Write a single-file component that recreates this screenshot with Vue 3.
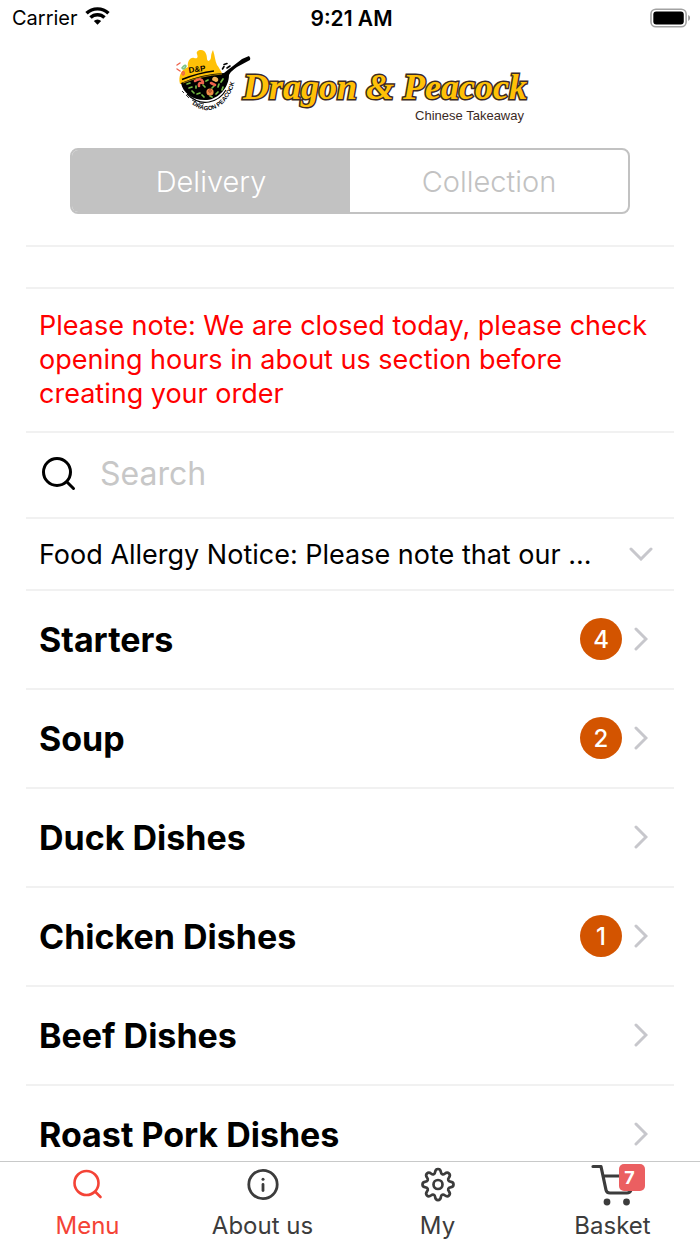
<script setup>
import { ref } from 'vue'

const mode = ref('Delivery')
const query = ref('')
const modes = ['Delivery', 'Collection']
const categories = [
  { name: 'Starters', count: 4 },
  { name: 'Soup', count: 2 },
  { name: 'Duck Dishes', count: 0 },
  { name: 'Chicken Dishes', count: 1 },
  { name: 'Beef Dishes', count: 0 },
  { name: 'Roast Pork Dishes', count: 0 },
]
</script>

<template>
  <div class="screen">
    <div class="status">
      <div class="carrier">
        <span>Carrier</span>
        <svg width="25" height="20" viewBox="0 0 26 20" aria-hidden="true">
          <g fill="none" stroke="#000" stroke-width="3.6">
            <path d="M1.6 7.2a16.4 16.4 0 0 1 22.8 0" />
            <path d="M5.7 11.6a10.4 10.4 0 0 1 14.6 0" />
          </g>
          <path d="M13 19 9.2 15.2a5.4 5.4 0 0 1 7.6 0z" />
        </svg>
      </div>
      <span class="time">9:21 AM</span>
      <div class="battery">
        <svg width="41" height="20" viewBox="0 0 42 20" aria-hidden="true">
          <rect x="1" y="1" width="36" height="18" rx="5" fill="none" stroke="#a2a2a2" stroke-width="1.6" />
          <rect x="3.4" y="3.4" width="31.2" height="13.2" rx="3" />
          <path d="M39.2 7v6q1.8-.8 1.8-3t-1.8-3z" fill="#8e8e8e" />
        </svg>
      </div>
    </div>

    <header class="brand">
      <svg class="logo" viewBox="0 0 360 80" role="img" aria-label="Dragon &amp; Peacock Chinese Takeaway">
        <!-- flames -->
        <path fill="#ffc107" d="M10 39C8 31 11 25 18 22C17 17 20 12 24 13C28 14 28 12 27 9C26 7 28 5 31 5C36 5 37 11 37 14C38 18 41 15 41 12C41 9 42 7 43 5C45 11 45 16 47 20C49 22 50 25 52 28L50 30L11 39Z" />
        <!-- wok and handle -->
        <path d="M11 38Q31 29 54 28L59 24Q67 18 72 14L79 11Q81 13 80 15L67 22Q60 27 59 30C59 42 49 54 37 55C23 56 13 48 11 38Z" />
        <path d="M12 34.500Q28 28 44 26" fill="none" stroke="#000" stroke-width="1.4" />
        <path d="M13 38Q30 31 52 29" fill="none" stroke="#ffc107" stroke-width="0.6" />
        <path d="M17 49Q27 59 39 57Q50 55 56 45" fill="none" stroke="#000" stroke-width="1.2" />
        <path d="M12 46L14 48M16 50L19 53M22 55L26 57M29 58L34 59" fill="none" stroke="#222" stroke-width="0.9" />
        <path d="M54 19.500L57 18.500M52.500 24L54 21.500M57 23L60 21" fill="none" stroke="#000" stroke-width="1.6" stroke-linecap="round" />
        <!-- vegetables -->
        <g fill="none" stroke-linecap="round" stroke-width="1.700">
          <path stroke="#75b943" d="M17 39L20 38M19 43L22 42M22 46L24 48M27 49L30 48M32 50L34 52M26 43L26 41M36 36L38 35M33 40L35 42M48 42L49 39M51 37L53 34M46 49L48 47M52 45L53 42M44 41L42 43M40 51L42 52" />
          <path stroke="#ef634c" stroke-width="2.600" d="M25 36Q31 32 33 37M29 41Q28 37 33 38M41 38L45 40" />
          <path stroke="#ef634c" stroke-width="1.400" d="M7 20L10 18M7 24L10 26M12 29Q12 26 14 27Q15 29 13 30" />
          <path stroke="#7dc383" stroke-width="1.600" d="M12 23Q15 19 16 21Q15 24 13 24" />
        </g>
        <circle cx="40" cy="47" r="3.600" fill="#f28c47" />
        <circle cx="40" cy="46" r="1.300" fill="none" stroke="#a7472a" />
        <path fill="#f2b45b" d="M42 34Q43 31 46 32Q49 33 48 36Q46 38 44 36Q42 36 42 34Z" />
        <path id="wok-rim" d="M22 59C34 69 47 66 55 56C60 50 64 43 66 30" fill="none" />
        <text class="wok-ring"><textPath href="#wok-rim">DRAGON PEACOCK</textPath></text>
        <text class="wok-name" x="19" y="28" transform="rotate(-8 19 28)">D&amp;P</text>
        <text class="wordmark" x="73" y="54">Dragon &amp; Peacock</text>
        <text class="tagline" x="354" y="75">Chinese Takeaway</text>
      </svg>
    </header>

    <main class="content">
      <div class="segment" role="group" aria-label="Order type">
        <button
          v-for="m in modes"
          :key="m"
          type="button"
          :class="{ active: mode === m }"
          :aria-pressed="mode === m"
          @click="mode = m"
        >{{ m }}</button>
      </div>

      <div class="spacer"></div>
      <p class="notice">Please note: We are closed today, please check opening hours in about us section before creating your order</p>

      <div class="search">
        <label for="search" aria-label="Search">
          <svg width="36" height="36" viewBox="0 0 36 36" fill="none" stroke="#000" stroke-width="3" stroke-linecap="round" aria-hidden="true">
            <circle cx="17" cy="17" r="13.500" />
            <path d="M27 27l6.500 6.500" />
          </svg>
        </label>
        <input id="search" v-model="query" type="text" placeholder="Search" />
      </div>

      <button class="allergy" type="button">
        <span>Food Allergy Notice: Please note that our ...</span>
        <svg width="24" height="14" viewBox="0 0 24 14" aria-hidden="true">
          <path d="M2 2l10 10L22 2" fill="none" stroke="#c7c7cc" stroke-width="3" stroke-linecap="round" />
        </svg>
      </button>

      <button v-for="c in categories" :key="c.name" class="category" type="button">
        <span class="name">{{ c.name }}</span>
        <span v-if="c.count" class="count">{{ c.count }}</span>
        <svg width="14" height="24" viewBox="0 0 14 24" aria-hidden="true">
          <path d="M2 2l10 10L2 22" fill="none" stroke="#c7c7cc" stroke-width="3" stroke-linecap="round" />
        </svg>
      </button>
    </main>

    <nav class="tabs">
      <a href="#menu" class="current" aria-current="page">
        <svg width="44" height="44" viewBox="0 0 44 44" fill="none" stroke="currentColor" stroke-width="2.6" stroke-linecap="round" aria-hidden="true">
          <circle cx="20.500" cy="21" r="12" />
          <path d="M29.500 30l5 5" />
        </svg>
        <span>Menu</span>
      </a>
      <a href="#about">
        <svg width="44" height="44" viewBox="0 0 44 44" fill="none" stroke="currentColor" stroke-width="2.8" stroke-linecap="round" aria-hidden="true">
          <circle cx="22" cy="22.500" r="14.200" />
          <path d="M22 22.500v6" />
          <circle cx="22" cy="17.300" r="1.500" fill="currentColor" stroke="none" />
        </svg>
        <span>About us</span>
      </a>
      <a href="#my">
        <svg width="44" height="44" viewBox="0 0 44 44" fill="none" stroke="currentColor" stroke-width="2.7" stroke-linejoin="round" aria-hidden="true">
          <circle cx="22" cy="22.500" r="4.500" />
          <path d="M19.100 10.200C19.600 5.900 24.400 5.900 24.900 10.200C25.100 12.200 27.100 13 28.700 11.700C32.100 9 35.500 12.400 32.800 15.800C31.500 17.400 32.300 19.400 34.300 19.600C38.600 20.100 38.600 24.900 34.300 25.400C32.300 25.600 31.500 27.600 32.800 29.200C35.500 32.600 32.100 36 28.700 33.300C27.100 32 25.100 32.800 24.900 34.800C24.400 39.100 19.600 39.100 19.100 34.800C18.900 32.800 16.900 32 15.300 33.300C11.900 36 8.500 32.600 11.200 29.200C12.500 27.600 11.700 25.600 9.700 25.400C5.400 24.900 5.400 20.100 9.700 19.600C11.700 19.400 12.500 17.400 11.200 15.800C8.500 12.400 11.900 9 15.300 11.700C16.900 13 18.900 12.200 19.100 10.200Z" />
        </svg>
        <span>My</span>
      </a>
      <a href="#basket">
        <span class="cart">
          <svg width="44" height="44" viewBox="0 0 44 44" fill="none" stroke="currentColor" stroke-width="3.2" stroke-linecap="round" stroke-linejoin="round" aria-hidden="true">
            <path d="M2 4.500h8l5 23.500q.6 3 4 3h17q3 0 4-3l4-14H12" />
            <circle cx="16" cy="40" r="3.400" fill="currentColor" stroke="none" />
            <circle cx="35.500" cy="40" r="3.400" fill="currentColor" stroke="none" />
          </svg>
          <span class="badge">7</span>
        </span>
        <span>Basket</span>
      </a>
    </nav>
  </div>
</template>

<style>
body {
  margin: 0;
  background: #fff;
}
</style>

<style scoped>
.screen {
  display: flex;
  flex-direction: column;
  height: 100vh;
  overflow: hidden;
  background: #fff;
  color: #000;
  font-family: Inter, "Liberation Sans", sans-serif;
}

button,
input {
  margin: 0;
  padding: 0;
  border: 0;
  background: none;
  color: inherit;
  font: inherit;
}

svg {
  display: block;
  flex: none;
}

.status {
  display: grid;
  grid-template-columns: 1fr auto 1fr;
  align-items: center;
  flex: none;
  height: 36px;
  padding: 0 9px 0 12px;
  font-size: 20px;
}

.carrier {
  display: flex;
  align-items: center;
  gap: 7px;
}

.carrier svg {
  margin-bottom: 4px;
}

.time {
  font-size: 21px;
  font-weight: 600;
}

.battery {
  justify-self: end;
}

.brand {
  display: flex;
  justify-content: center;
  flex: none;
  padding: 9px 0 23px;
}

.logo {
  width: 360px;
  height: 80px;
  overflow: visible;
}

.wordmark {
  font: italic 700 36px "Liberation Serif", serif;
  fill: #ffc107;
  stroke: #3b2a25;
  stroke-width: 3px;
  paint-order: stroke;
}

.tagline {
  font: 13px "Liberation Sans", sans-serif;
  fill: #3b2a25;
  text-anchor: end;
}

.wok-ring {
  font: 700 6px "Liberation Sans", sans-serif;
}

.wok-name {
  font: 700 8px "Liberation Sans", sans-serif;
}

.content {
  display: flex;
  flex-direction: column;
  flex: 1;
  min-height: 0;
  overflow: hidden;
  padding: 0 26px;
}

.content > * {
  flex: none;
}

.segment {
  display: grid;
  grid-template-columns: 1fr 1fr;
  height: 62px;
  margin: 0 44px 31px;
  overflow: hidden;
  border: 2px solid #c2c2c2;
  border-radius: 8px;
  color: #c2c2c2;
  font-size: 29px;
  font-weight: 300;
}

.segment .active {
  background: #c2c2c2;
  color: #fff;
}

.spacer {
  height: 40px;
  border-top: 2px solid #f1f1f1;
}

.notice {
  margin: 0;
  padding: 20px 13px;
  border-top: 2px solid #f1f1f1;
  color: #f00;
  font-size: 27px;
  line-height: 34px;
}

.search {
  display: flex;
  align-items: center;
  gap: 24px;
  height: 80px;
  padding: 0 14px 4px;
  border-top: 2px solid #f1f1f1;
}

.search input {
  flex: 1;
  min-width: 0;
  height: 60px;
  outline: none;
  font-size: 32px;
}

.search input::placeholder {
  color: #c7c7c7;
  opacity: 1;
}

.allergy {
  display: flex;
  align-items: center;
  justify-content: space-between;
  height: 72px;
  padding: 0 21px 0 13px;
  border-top: 2px solid #f1f1f1;
  font-size: 27px;
  text-align: left;
}

.allergy span {
  overflow: hidden;
  white-space: nowrap;
  text-overflow: ellipsis;
}

.category {
  display: flex;
  align-items: center;
  gap: 12px;
  height: 99px;
  padding: 0 26px 1px 13px;
  border-top: 2px solid #f1f1f1;
  text-align: left;
}

.name {
  flex: 1;
  font-size: 34px;
  font-weight: 700;
}

.count {
  display: grid;
  place-items: center;
  width: 42px;
  height: 42px;
  border-radius: 50%;
  background: #d35400;
  color: #fff;
  font-size: 24px;
  font-weight: 500;
}

.tabs {
  display: grid;
  grid-template-columns: repeat(4, 1fr);
  flex: none;
  height: 82px;
  border-top: 1px solid #c8c9c9;
}

.tabs a {
  display: flex;
  flex-direction: column;
  align-items: center;
  gap: 4px;
  color: #3c3c3c;
  font-size: 24px;
  line-height: 32px;
  text-decoration: none;
}

.tabs .current {
  color: #f44336;
}

.cart {
  position: relative;
}

.badge {
  position: absolute;
  top: 2px;
  right: -10px;
  box-sizing: border-box;
  width: 26px;
  height: 27px;
  padding-right: 4px;
  border-radius: 5px;
  background: #eb5f61;
  color: #fff;
  font-size: 18px;
  font-weight: 700;
  line-height: 27px;
  text-align: center;
}
</style>
